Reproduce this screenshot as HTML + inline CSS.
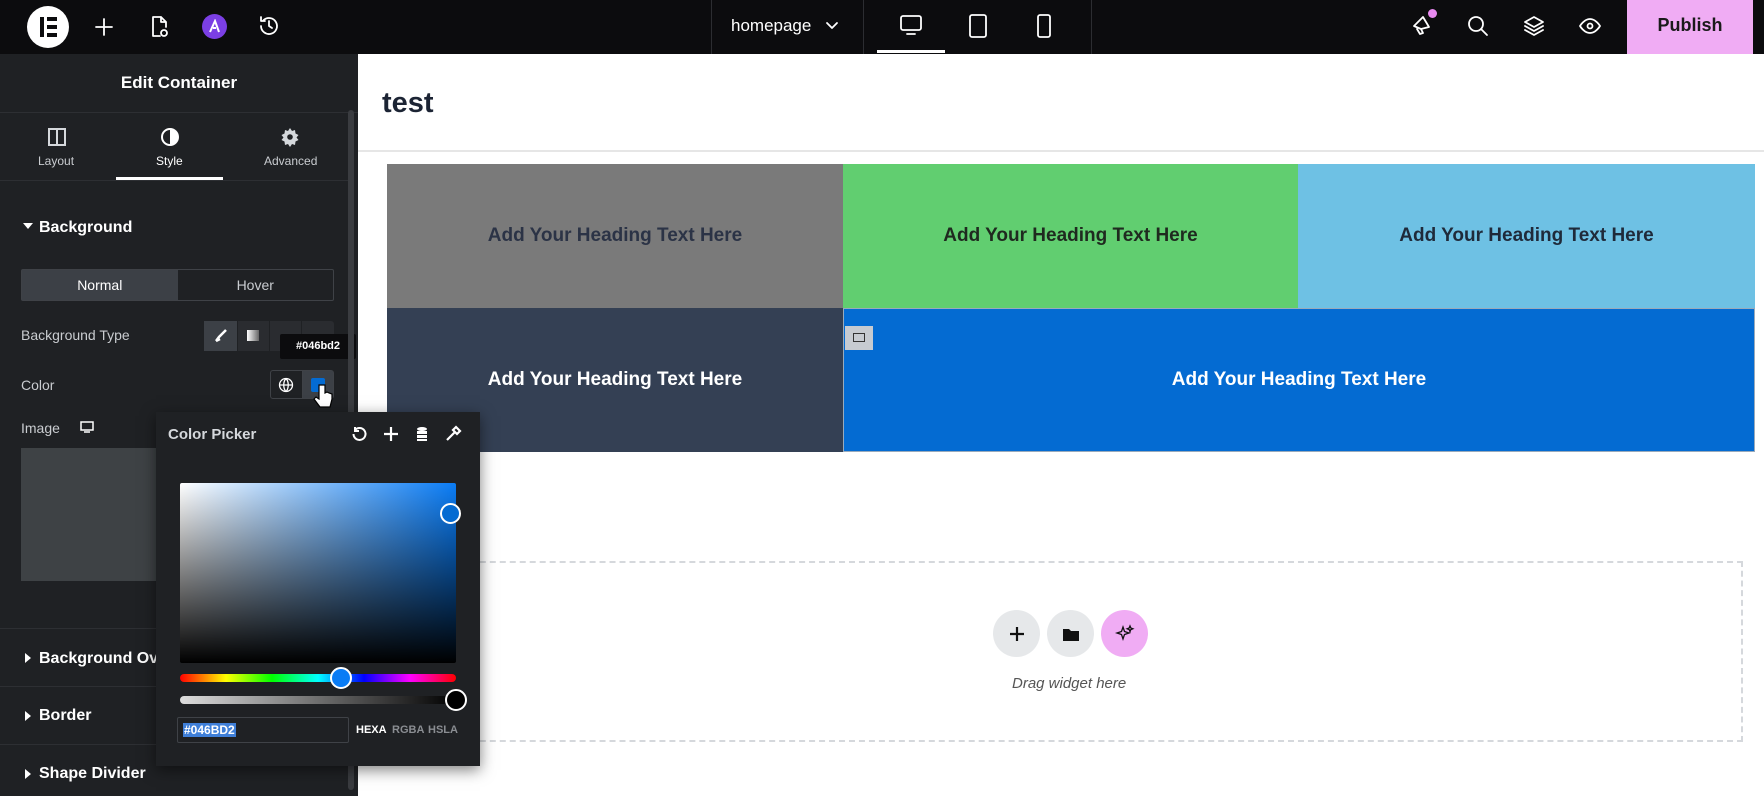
<!DOCTYPE html>
<html><head><meta charset="utf-8"><style>
*{box-sizing:border-box;margin:0;padding:0}
body{width:1764px;height:796px;overflow:hidden;position:relative;background:#fff;font-family:"Liberation Sans",Arial,sans-serif}
.a{position:absolute}
#top{left:0;top:0;width:1764px;height:54px;background:#0c0c0e}
#side{left:0;top:54px;width:358px;height:742px;background:#1f2124;color:#d5d8dc}
.lbl{font-size:14px;color:#c9ccd0}
.h{font-size:16px;font-weight:bold;color:#fff}
.cell{display:flex;align-items:center;justify-content:center;font-weight:bold;font-size:19px}
.ic{stroke:#fff;fill:none;stroke-width:1.8;stroke-linecap:round;stroke-linejoin:round}
</style></head><body>
<div id="top" class="a">
 <div class="a" style="left:27px;top:6px;width:42px;height:42px;border-radius:50%;background:#fff"></div>
 <div class="a" style="left:40px;top:17px;width:4px;height:20px;background:#0c0c0e"></div>
 <div class="a" style="left:47px;top:17px;width:10px;height:4px;background:#0c0c0e"></div>
 <div class="a" style="left:47px;top:25px;width:10px;height:4px;background:#0c0c0e"></div>
 <div class="a" style="left:47px;top:33px;width:10px;height:4px;background:#0c0c0e"></div>
 <svg class="a" style="left:93px;top:16px" width="22" height="22"><path class="ic" d="M11 3v16M3 11h16"/></svg>
 <svg class="a" style="left:148px;top:14px" width="22" height="26"><path class="ic" d="M13 3H5v19h7M13 3l5 5v5M13 3v5h5"/><circle class="ic" cx="16" cy="19" r="3"/></svg>
 <div class="a" style="left:202px;top:14px;width:25px;height:25px;border-radius:50%;background:#7b3fe4"></div>
 <svg class="a" style="left:207px;top:19px" width="15" height="15"><path d="M3 13L8 2l4 11M6 9h3" stroke="#fff" stroke-width="2" fill="none"/></svg>
 <svg class="a" style="left:257px;top:14px" width="24" height="24"><path class="ic" d="M4 12a8 8 0 1 0 2.5-5.8M4 3v4h4M12 7v5l3 2"/></svg>
 <div class="a" style="left:711px;top:0;width:1px;height:54px;background:#2c2d31"></div>
 <div class="a" style="left:731px;top:16px;font-size:17px;color:#fff">homepage</div>
 <svg class="a" style="left:825px;top:19px" width="14" height="14"><path class="ic" d="M2 4l5 5 5-5"/></svg>
 <div class="a" style="left:863px;top:0;width:1px;height:54px;background:#2c2d31"></div>
 <svg class="a" style="left:899px;top:14px" width="24" height="22"><rect class="ic" x="2" y="2" width="20" height="14" rx="2"/><path class="ic" d="M8 20h8"/></svg>
 <div class="a" style="left:877px;top:50px;width:68px;height:3px;background:#fff"></div>
 <svg class="a" style="left:968px;top:13px" width="20" height="26"><rect class="ic" x="2" y="2" width="16" height="22" rx="2"/></svg>
 <svg class="a" style="left:1036px;top:13px" width="16" height="26"><rect class="ic" x="2" y="2" width="12" height="22" rx="2"/></svg>
 <div class="a" style="left:1091px;top:0;width:1px;height:54px;background:#2c2d31"></div>
 <svg class="a" style="left:1410px;top:12px" width="26" height="26"><path class="ic" d="M4 14l9-9 6 10-8 2zM7 17l3 5 3-1-2-4"/></svg>
 <div class="a" style="left:1428px;top:9px;width:9px;height:9px;border-radius:50%;background:#e98af0"></div>
 <svg class="a" style="left:1466px;top:14px" width="24" height="24"><circle class="ic" cx="10" cy="10" r="7"/><path class="ic" d="M15 15l6 6"/></svg>
 <svg class="a" style="left:1522px;top:14px" width="24" height="24"><path class="ic" d="M12 3l9 5-9 5-9-5zM3 12l9 5 9-5M3 16l9 5 9-5"/></svg>
 <svg class="a" style="left:1578px;top:14px" width="24" height="24"><path class="ic" d="M2 12s4-7 10-7 10 7 10 7-4 7-10 7S2 12 2 12z"/><circle class="ic" cx="12" cy="12" r="2.5"/></svg>
 <div class="a" style="left:1627px;top:0;width:126px;height:54px;background:#f0acf4;color:#1a1a1a;font-size:18px;font-weight:bold;text-align:center;line-height:50px">Publish</div>
</div>

<div id="side" class="a">
 <div class="a h" style="left:0;width:358px;top:19px;text-align:center;font-size:17px">Edit Container</div>
 <div class="a" style="left:0;top:58px;width:358px;height:1px;background:#2d2f33"></div>
 <svg class="a" style="left:47px;top:73px" width="20" height="20"><rect x="2" y="2" width="16" height="16" fill="none" stroke="#d5d8dc" stroke-width="2"/><path d="M10 2v16" stroke="#d5d8dc" stroke-width="2"/></svg>
 <div class="a" style="left:38px;top:100px;font-size:12px;color:#c9ccd0">Layout</div>
 <svg class="a" style="left:160px;top:73px" width="20" height="20"><circle cx="10" cy="10" r="8" fill="none" stroke="#fff" stroke-width="2"/><path d="M10 2a8 8 0 0 1 0 16z" fill="#fff"/></svg>
 <div class="a" style="left:156px;top:100px;font-size:12px;color:#fff">Style</div>
 <svg class="a" style="left:280px;top:73px" width="20" height="20"><path d="M10 1l2 3 3-1 .5 3.5 3 1.5-2 2.5 2 2.5-3 1.5-.5 3.5-3-1-2 3-2-3-3 1-.5-3.5-3-1.5 2-2.5-2-2.5 3-1.5.5-3.5 3 1z" fill="#d5d8dc"/><circle cx="10" cy="10" r="2.8" fill="#1f2124"/></svg>
 <div class="a" style="left:264px;top:100px;font-size:12px;color:#c9ccd0">Advanced</div>
 <div class="a" style="left:116px;top:123px;width:107px;height:3px;background:#fff"></div>
 <div class="a" style="left:0;top:126px;width:350px;height:1px;background:#2d2f33"></div>
 <div class="a" style="left:23px;top:169px;width:0;height:0;border-left:5px solid transparent;border-right:5px solid transparent;border-top:6px solid #fff"></div>
 <div class="a h" style="left:39px;top:165px">Background</div>
 <div class="a" style="left:21px;top:215px;width:313px;height:32px;border:1px solid #3f4247;border-radius:2px;display:flex;font-size:14px">
  <div style="flex:1;background:#3c4046;color:#fff;text-align:center;line-height:30px">Normal</div>
  <div style="flex:1;text-align:center;line-height:30px;color:#c9ccd0">Hover</div>
 </div>
 <div class="a lbl" style="left:21px;top:273px">Background Type</div>
 <div class="a" style="left:204px;top:267px;width:130px;height:30px;background:#2a2c30;border-radius:3px;display:flex">
  <div style="width:33px;background:#3c4046"></div><div style="width:32px;border-left:1px solid #1f2124"></div><div style="width:32px;border-left:1px solid #1f2124"></div><div style="width:33px;border-left:1px solid #1f2124"></div>
 </div>
 <svg class="a" style="left:213px;top:274px" width="16" height="16"><path d="M3 13l3-4 7-7M3 13l4-2" stroke="#fff" stroke-width="2.5" fill="none"/></svg>
 <div class="a" style="left:247px;top:276px;width:12px;height:11px;background:linear-gradient(90deg,#fff,#666)"></div>
 <div class="a lbl" style="left:21px;top:323px">Color</div>
 <div class="a" style="left:270px;top:316px;width:64px;height:29px;border:1px solid #3f4247;border-radius:3px;display:flex"><div style="width:32px;border-right:1px solid #3f4247"></div><div style="flex:1;background:#3c4046"></div></div>
 <svg class="a" style="left:278px;top:323px" width="16" height="16"><circle cx="8" cy="8" r="6.5" fill="none" stroke="#fff" stroke-width="1.3"/><path d="M1.5 8h13M8 1.5c-3 3-3 10 0 13M8 1.5c3 3 3 10 0 13" fill="none" stroke="#fff" stroke-width="1.3"/></svg>
 <div class="a" style="left:311px;top:324px;width:14px;height:14px;background:#046bd2;border-radius:2px"></div>
 <svg class="a" style="left:313px;top:329px" width="22" height="28"><path d="M6 2v14l-3-2-2 2 6 8h10l2-8v-5l-3-1-2-1-2 1V2z" fill="#fff" stroke="#000" stroke-width="1.2"/></svg>
 <div class="a" style="left:280px;top:280px;width:76px;height:25px;background:#0c0c0e;color:#fff;font-size:11px;font-weight:bold;text-align:center;line-height:25px;border-radius:2px">#046bd2</div>
 <div class="a lbl" style="left:21px;top:366px">Image</div>
 <svg class="a" style="left:80px;top:367px" width="14" height="12"><rect x="1" y="1" width="12" height="8" fill="none" stroke="#fff" stroke-width="1.5"/><path d="M4 11h6" stroke="#fff" stroke-width="1.5"/></svg>
 <div class="a" style="left:21px;top:394px;width:140px;height:133px;background:#3e4245"></div>
 <div class="a" style="left:0;top:574px;width:350px;height:1px;background:#2d2f33"></div>
 <div class="a" style="left:25px;top:599px;border-top:5px solid transparent;border-bottom:5px solid transparent;border-left:6px solid #fff"></div>
 <div class="a h" style="left:39px;top:596px">Background Overlay</div>
 <div class="a" style="left:0;top:632px;width:350px;height:1px;background:#2d2f33"></div>
 <div class="a" style="left:25px;top:657px;border-top:5px solid transparent;border-bottom:5px solid transparent;border-left:6px solid #fff"></div>
 <div class="a h" style="left:39px;top:653px">Border</div>
 <div class="a" style="left:0;top:690px;width:350px;height:1px;background:#2d2f33"></div>
 <div class="a" style="left:25px;top:715px;border-top:5px solid transparent;border-bottom:5px solid transparent;border-left:6px solid #fff"></div>
 <div class="a h" style="left:39px;top:711px">Shape Divider</div>
 <div class="a" style="left:348px;top:56px;width:6px;height:680px;background:#3a3c40;border-radius:3px"></div>
</div>

<div class="a" style="left:382px;top:87px;font-size:29px;font-weight:bold;color:#1c2434">test</div>
<div class="a" style="left:358px;top:150px;width:1406px;height:2px;background:#e6e6e6"></div>
<div class="a cell" style="left:387px;top:164px;width:456px;height:144px;background:#7a7a7a;color:#2b3346">Add Your Heading Text Here</div>
<div class="a cell" style="left:843px;top:164px;width:455px;height:144px;background:#61ce70;color:#1f2a1f">Add Your Heading Text Here</div>
<div class="a cell" style="left:1298px;top:164px;width:457px;height:144px;background:#6ec1e4;color:#1f2a3a">Add Your Heading Text Here</div>
<div class="a cell" style="left:387px;top:308px;width:456px;height:144px;background:#344054;color:#fff">Add Your Heading Text Here</div>
<div class="a cell" style="left:843px;top:308px;width:912px;height:144px;background:#046bd2;color:#fff;border:1px solid #9ab">Add Your Heading Text Here</div>
<div class="a" style="left:845px;top:326px;width:28px;height:24px;background:#c7cbd1"></div>
<div class="a" style="left:853px;top:333px;width:12px;height:9px;border:1.5px solid #333"></div>
<div class="a" style="left:400px;top:561px;width:1343px;height:181px;border:2px dashed #d5d8dc"></div>
<div class="a" style="left:993px;top:610px;width:47px;height:47px;border-radius:50%;background:#e6e8ea"></div>
<svg class="a" style="left:1007px;top:624px" width="20" height="20"><path d="M10 3v14M3 10h14" stroke="#111" stroke-width="2.2"/></svg>
<div class="a" style="left:1047px;top:610px;width:47px;height:47px;border-radius:50%;background:#e6e8ea"></div>
<svg class="a" style="left:1061px;top:624px" width="20" height="20"><path d="M2 5h6l2 2h8v10H2z" fill="#111"/></svg>
<div class="a" style="left:1101px;top:610px;width:47px;height:47px;border-radius:50%;background:#f0acf4"></div>
<svg class="a" style="left:1114px;top:623px" width="22" height="22"><path d="M9 4l1.5 4.5L15 10l-4.5 1.5L9 16l-1.5-4.5L3 10l4.5-1.5zM16 3l.8 2 2 .8-2 .8-.8 2-.8-2-2-.8 2-.8z" fill="none" stroke="#111" stroke-width="1.3"/></svg>
<div class="a" style="left:1012px;top:675px;font-size:15px;font-style:italic;color:#555">Drag widget here</div>

<div class="a" style="left:156px;top:412px;width:324px;height:354px;background:#1f2124;box-shadow:0 4px 14px rgba(0,0,0,.5)">
 <div class="a" style="left:12px;top:14px;font-size:15px;font-weight:bold;color:#d5d8dc">Color Picker</div>
 <svg class="a" style="left:194px;top:13px" width="18" height="18"><path d="M5 5a6 6 0 1 1-1.5 4M5 2v4h4" fill="none" stroke="#fff" stroke-width="2"/></svg>
 <svg class="a" style="left:226px;top:13px" width="18" height="18"><path d="M9 2v14M2 9h14" stroke="#fff" stroke-width="2.2"/></svg>
 <svg class="a" style="left:257px;top:13px" width="18" height="18"><ellipse cx="9" cy="4" rx="5" ry="2" fill="#fff"/><rect x="4" y="6" width="10" height="3" fill="#fff"/><rect x="4" y="10" width="10" height="3" fill="#fff"/><rect x="4" y="14" width="10" height="2" fill="#fff"/></svg>
 <svg class="a" style="left:288px;top:13px" width="18" height="18"><path d="M3 15l8-8M12 2l4 4-3 3-4-4z" stroke="#fff" stroke-width="2.2" fill="none"/></svg>
 <div class="a" style="left:24px;top:71px;width:276px;height:180px;background:linear-gradient(to top,#000,transparent),linear-gradient(to right,#fff,#0a7cf5);border-radius:2px"></div>
 <div class="a" style="left:284px;top:91px;width:21px;height:21px;border-radius:50%;border:2px solid #fff;background:#046bd2"></div>
 <div class="a" style="left:24px;top:262px;width:276px;height:8px;border-radius:4px;background:linear-gradient(90deg,red,#ff0,#0f0,#0ff,#00f,#f0f,red)"></div>
 <div class="a" style="left:174px;top:255px;width:22px;height:22px;border-radius:50%;border:2px solid #fff;background:#0a7cf5"></div>
 <div class="a" style="left:24px;top:284px;width:276px;height:8px;border-radius:4px;background:linear-gradient(90deg,#ddd,#000)"></div>
 <div class="a" style="left:289px;top:277px;width:22px;height:22px;border-radius:50%;border:2px solid #fff;background:#000"></div>
 <div class="a" style="left:21px;top:305px;width:172px;height:26px;border:1px solid #3f4247;border-radius:2px"></div>
 <div class="a" style="left:27px;top:311px;background:#3f7fd8;color:#fff;font-size:12px;font-weight:bold;padding:0 1px">#046BD2</div>
 <div class="a" style="left:200px;top:312px;font-size:11px;font-weight:bold;color:#fff">HEXA</div>
 <div class="a" style="left:236px;top:312px;font-size:11px;font-weight:bold;color:#8a8d92">RGBA</div>
 <div class="a" style="left:272px;top:312px;font-size:11px;font-weight:bold;color:#8a8d92">HSLA</div>
</div>
</body></html>
